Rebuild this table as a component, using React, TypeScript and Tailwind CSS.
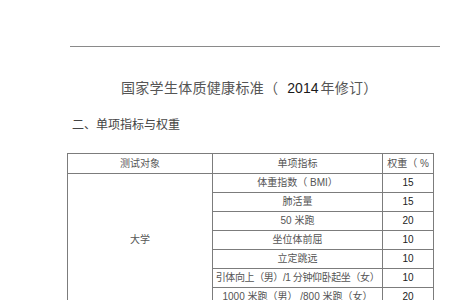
import React from "react";

type Row = { item: string; weight: string };

const rows: Row[] = [
  { item: "体重指数（ BMI）", weight: "15" },
  { item: "肺活量", weight: "15" },
  { item: "50 米跑", weight: "20" },
  { item: "坐位体前屈", weight: "10" },
  { item: "立定跳远", weight: "10" },
  { item: "引体向上（男）/1 分钟仰卧起坐（女）", weight: "10" },
  { item: "1000 米跑（男） /800 米跑（女）", weight: "20" },
];

const cell = "border border-[#7c7c7c] p-0 text-center align-middle whitespace-nowrap";

const App = () => {
  return (
    <div className="w-[450px] h-[300px] overflow-hidden bg-white font-['Liberation_Sans','Noto_Sans_CJK_SC',sans-serif]">
      <div className="pt-[46px]">
        <div className="ml-[70px] w-[370px] h-px bg-[#8a8a8a]" />
      </div>

      <h1 className="mt-[32px] pl-[121px] text-[14px] leading-[18px] tracking-[0.3px] text-[#555] whitespace-nowrap">
        国家学生体质健康标准（
        <span className="ml-[9px] mr-[2px] text-[#1a1a1a] tracking-normal">2014</span>
        年修订）
      </h1>

      <h2 className="mt-[20px] pl-[72px] text-[12px] leading-4 text-[#444]">
        二、单项指标与权重
      </h2>

      <table className="mt-[20px] ml-[67px] w-[366px] table-fixed border-collapse text-[10px] leading-none text-[#555]">
        <colgroup>
          <col className="w-[145px]" />
          <col className="w-[170px]" />
          <col className="w-[51px]" />
        </colgroup>
        <tbody>
          <tr className="h-[20px]">
            <td className={cell}>测试对象</td>
            <td className={cell}>单项指标</td>
            <td className={`${cell} overflow-hidden`}>权重（ %</td>
          </tr>
          {rows.map((r, i) => (
            <tr key={r.weight + i} className="h-[19px]">
              {i === 0 && (
                <td className={cell} rowSpan={rows.length}>
                  大学
                </td>
              )}
              <td className={`${cell} ${i === 5 ? "tracking-[-0.4px]" : ""}`}>
                {r.item}
              </td>
              <td className={`${cell} text-[#222]`}>{r.weight}</td>
            </tr>
          ))}
        </tbody>
      </table>
    </div>
  );
};

export default App;
